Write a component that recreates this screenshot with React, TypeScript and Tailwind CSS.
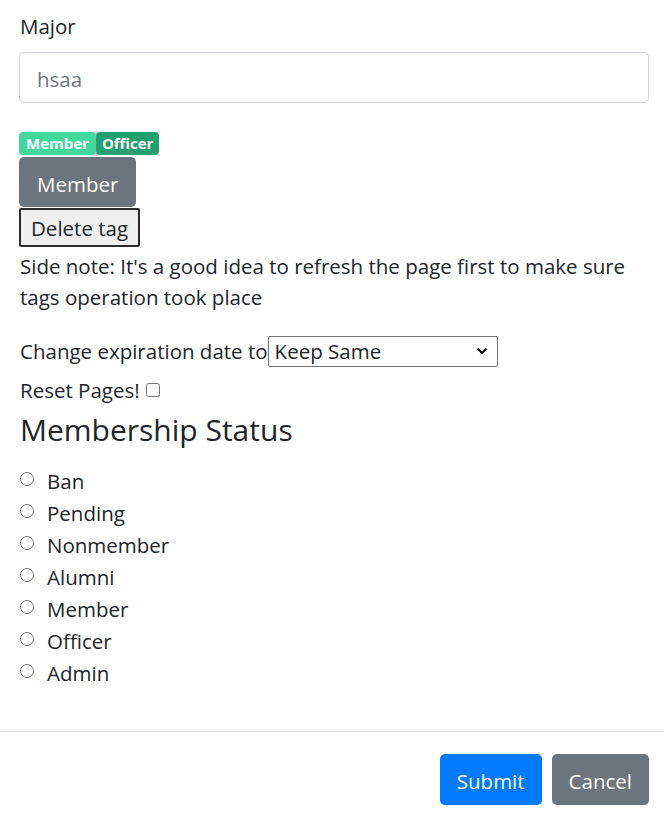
import { useState } from "react";

const statuses = ["Ban", "Pending", "Nonmember", "Alumni", "Member", "Officer", "Admin"];

export default function App() {
  const [status, setStatus] = useState("");
  const [reset, setReset] = useState(false);

  return (
    <div className="w-[664px] h-[814px] overflow-hidden bg-white text-[#212529] font-['Open_Sans',sans-serif] text-[20.5px] leading-[30px]">
      <div className="px-5 pt-[11px] h-[731px]">
        <label className="block mb-[11px]">Major</label>
        <input
          type="text"
          placeholder="hsaa"
          className="block w-[630px] h-[51px] -ml-px px-[17px] pt-[3px] border border-[#ced4da] rounded-[5px] placeholder:text-[#6c757d] outline-none"
        />

        <div className="mt-[29px] flex text-[15px] leading-[23px] font-bold text-white -ml-px">
          <span className="bg-[#42d89c] rounded-[4px] px-[7px] h-[23px]">Member</span>
          <span className="bg-[#23a072] rounded-[4px] px-[6px] h-[23px]">Officer</span>
        </div>
        <button className="mt-[2px] -ml-px block h-[50px] px-[18px] pt-[3px] bg-[#6c757d] text-white rounded-[5px]">
          Member
        </button>
        <button className="mt-px -ml-px block h-[39px] px-[10px] bg-[#efefef] border-2 border-[#2b2b2b] rounded-[2px] leading-[24px]">
          Delete tag
        </button>

        <p className="mt-[4px] mb-[20px] leading-[31px] w-[624px]">
          Side note: It's a good idea to refresh the page first to make sure tags operation took place
        </p>

        <div className="flex items-center h-[36px]">
          <span>Change expiration date to</span>
          <div className="relative">
            <select className="appearance-none w-[230px] h-[31px] border border-[#767676] rounded-[2px] pl-[6px] leading-[28px] outline-none">
              <option>Keep Same</option>
              <option>1 Semester</option>
              <option>1 Year</option>
            </select>
            <svg className="absolute right-[10px] top-[11px] pointer-events-none" width="12" height="8" viewBox="0 0 12 8">
              <path d="M1.5 1.5 6 6l4.5-4.5" fill="none" stroke="#000" strokeWidth="1.8" />
            </svg>
          </div>
        </div>

        <label className="flex items-center h-[30px] mt-[6px]">
          Reset Pages!
          <input
            type="checkbox"
            checked={reset}
            onChange={(e) => setReset(e.target.checked)}
            className="ml-[6px] w-[14px] h-[14px] m-0"
          />
        </label>

        <h4 className="mt-[7px] mb-[17px] text-[30px] leading-[36px] font-normal">Membership Status</h4>

        <div>
          {statuses.map((s) => (
            <label key={s} className="flex items-center h-[32px]">
              <input
                type="radio"
                name="status"
                checked={status === s}
                onChange={() => setStatus(s)}
                className="w-[14px] h-[14px] m-0 -mt-[5px]"
              />
              <span className="ml-[13px]">{s}</span>
            </label>
          ))}
        </div>
      </div>

      <div className="border-t border-[#dee2e6] flex justify-end gap-[10px] pt-[22px] pr-[15px]">
        <button className="h-[51px] px-[17px] pt-[2px] bg-[#007bff] text-white rounded-[5px]">Submit</button>
        <button className="h-[51px] px-[17px] pt-[2px] bg-[#6c757d] text-white rounded-[5px]">Cancel</button>
      </div>
    </div>
  );
}
